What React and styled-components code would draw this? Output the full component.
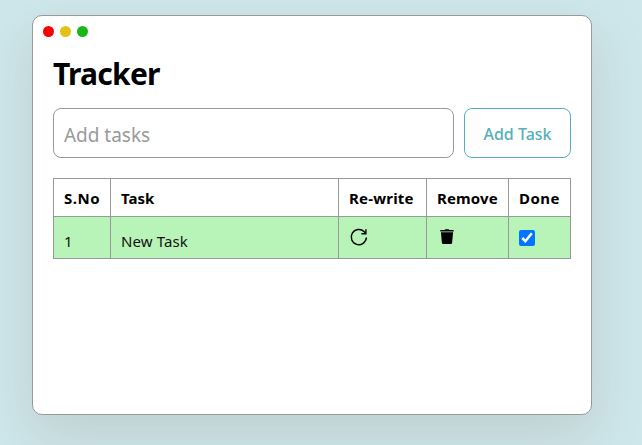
import React, { useState } from 'react';
import styled, { createGlobalStyle } from 'styled-components';

const GlobalStyle = createGlobalStyle`
  * { box-sizing: border-box; }
  body {
    margin: 0;
    height: 445px;
    overflow: hidden;
    background: #cde7ea;
    font-family: "Segoe UI", "Noto Sans", "Open Sans", sans-serif;
    color: #000;
  }
`;

const Window = styled.main`
  width: 560px;
  height: 400px;
  margin: 15px 0 0 32px;
  padding: 10px 20px;
  display: flex;
  flex-direction: column;
  background: #fff;
  border: 1px solid #999;
  border-radius: 10px;
  box-shadow: 0 20px 50px rgba(150, 128, 128, 0.24);
`;

const Dots = styled.div`
  display: flex;
  gap: 6px;
  margin-left: -10px;
`;

const Dot = styled.span`
  width: 11px;
  height: 11px;
  border-radius: 50%;
  background: ${(p) => p.$color};
`;

const Title = styled.h1`
  margin: 14px 0 12px;
  height: 45px;
  line-height: 45px;
  font-size: 30px;
  font-weight: 700;
  letter-spacing: -0.75px;
`;

const Form = styled.form`
  display: flex;
  gap: 10px;
  height: 50px;
`;

const TaskInput = styled.input`
  width: 401px;
  padding: 4px 10px 0;
  border: 1px solid #999;
  border-radius: 8px;
  outline: none;
  font: 400 19px "Segoe UI", "Noto Sans", sans-serif;
  letter-spacing: -0.02px;
  &::placeholder { color: #999; }
`;

const AddButton = styled.button`
  width: 107px;
  padding: 1px 0 0;
  border: 1px solid #54b0bb;
  border-radius: 8px;
  background: #fff;
  color: #54b0bb;
  font: 500 16px "Segoe UI", "Noto Sans", sans-serif;
  letter-spacing: 0;
`;

const Table = styled.table`
  width: 518px;
  margin-top: 20px;
  table-layout: fixed;
  border-collapse: collapse;
`;

const Column = styled.col`
  width: ${(p) => p.$width}px;
`;

const HeadCell = styled.th`
  height: 38px;
  padding: 0 0 0 10px;
  border: 1px solid #999;
  text-align: left;
  font-size: 15px;
  line-height: 20px;
  font-weight: 700;
  letter-spacing: ${(p) => p.$spacing || 0}px;
`;

const Cell = styled.td`
  height: 42px;
  padding: 7px 0 0 10px;
  border: 1px solid #999;
  background: #b8f4b8;
  color: #111;
  font-size: 15px;
  line-height: 20px;
  letter-spacing: 0.1px;
`;

const IconCell = styled(Cell)`
  padding: 0 0 0 9px;
  vertical-align: top;
`;

const IconButton = styled.button`
  display: block;
  margin-top: 9px;
  padding: 0;
  border: 0;
  background: none;
  color: #000;
  line-height: 0;
`;

const Check = styled.input`
  display: block;
  width: 16px;
  height: 16px;
  margin: 13px 0 0 1px;
  accent-color: #0075ff;
`;

const RefreshIcon = () => (
  <svg width="22" height="22" viewBox="0 0 22 22" fill="none" stroke="currentColor" strokeWidth="1.4">
    <path d="M18.4 11.5a7.6 7.6 0 1 1-2.2-5.8l1.5 1.7" />
    <path d="M13.4 7.8h4.5V3.2" />
  </svg>
);

const TrashIcon = () => (
  <svg width="22" height="22" viewBox="0 0 22 22" fill="currentColor">
    <path d="M4.3 4.1h4.2l.8-.9h3.4l.8.9h4.2v1.3H4.3z" />
    <path d="M4.9 6.2h12.2l-1 10.5c-.1.9-.7 1.4-1.6 1.4h-7c-.9 0-1.5-.5-1.6-1.4z" />
  </svg>
);

const columns = [
  { label: 'S.No', width: 57, spacing: 0.5 },
  { label: 'Task', width: 228, spacing: 0 },
  { label: 'Re-write', width: 88, spacing: 0.2 },
  { label: 'Remove', width: 82, spacing: 0.15 },
  { label: 'Done', width: 62, spacing: 0.45 },
];

export default function App() {
  const [done, setDone] = useState(true);
  const [draft, setDraft] = useState('');

  return (
    <>
      <GlobalStyle />
      <Window>
        <Dots>
          <Dot $color="#ff0000" />
          <Dot $color="#e3c216" />
          <Dot $color="#18b818" />
        </Dots>
        <Title>Tracker</Title>
        <Form onSubmit={(e) => e.preventDefault()}>
          <TaskInput
            placeholder="Add tasks"
            value={draft}
            onChange={(e) => setDraft(e.target.value)}
          />
          <AddButton>Add Task</AddButton>
        </Form>
        <Table>
          <colgroup>
            {columns.map((c) => <Column key={c.label} $width={c.width} />)}
          </colgroup>
          <thead>
            <tr>
              {columns.map((c) => (
                <HeadCell key={c.label} $spacing={c.spacing}>{c.label}</HeadCell>
              ))}
            </tr>
          </thead>
          <tbody>
            <tr>
              <Cell>1</Cell>
              <Cell>New Task</Cell>
              <IconCell>
                <IconButton aria-label="Re-write"><RefreshIcon /></IconButton>
              </IconCell>
              <IconCell>
                <IconButton aria-label="Remove"><TrashIcon /></IconButton>
              </IconCell>
              <IconCell>
                <Check type="checkbox" checked={done} onChange={(e) => setDone(e.target.checked)} />
              </IconCell>
            </tr>
          </tbody>
        </Table>
      </Window>
    </>
  );
}
